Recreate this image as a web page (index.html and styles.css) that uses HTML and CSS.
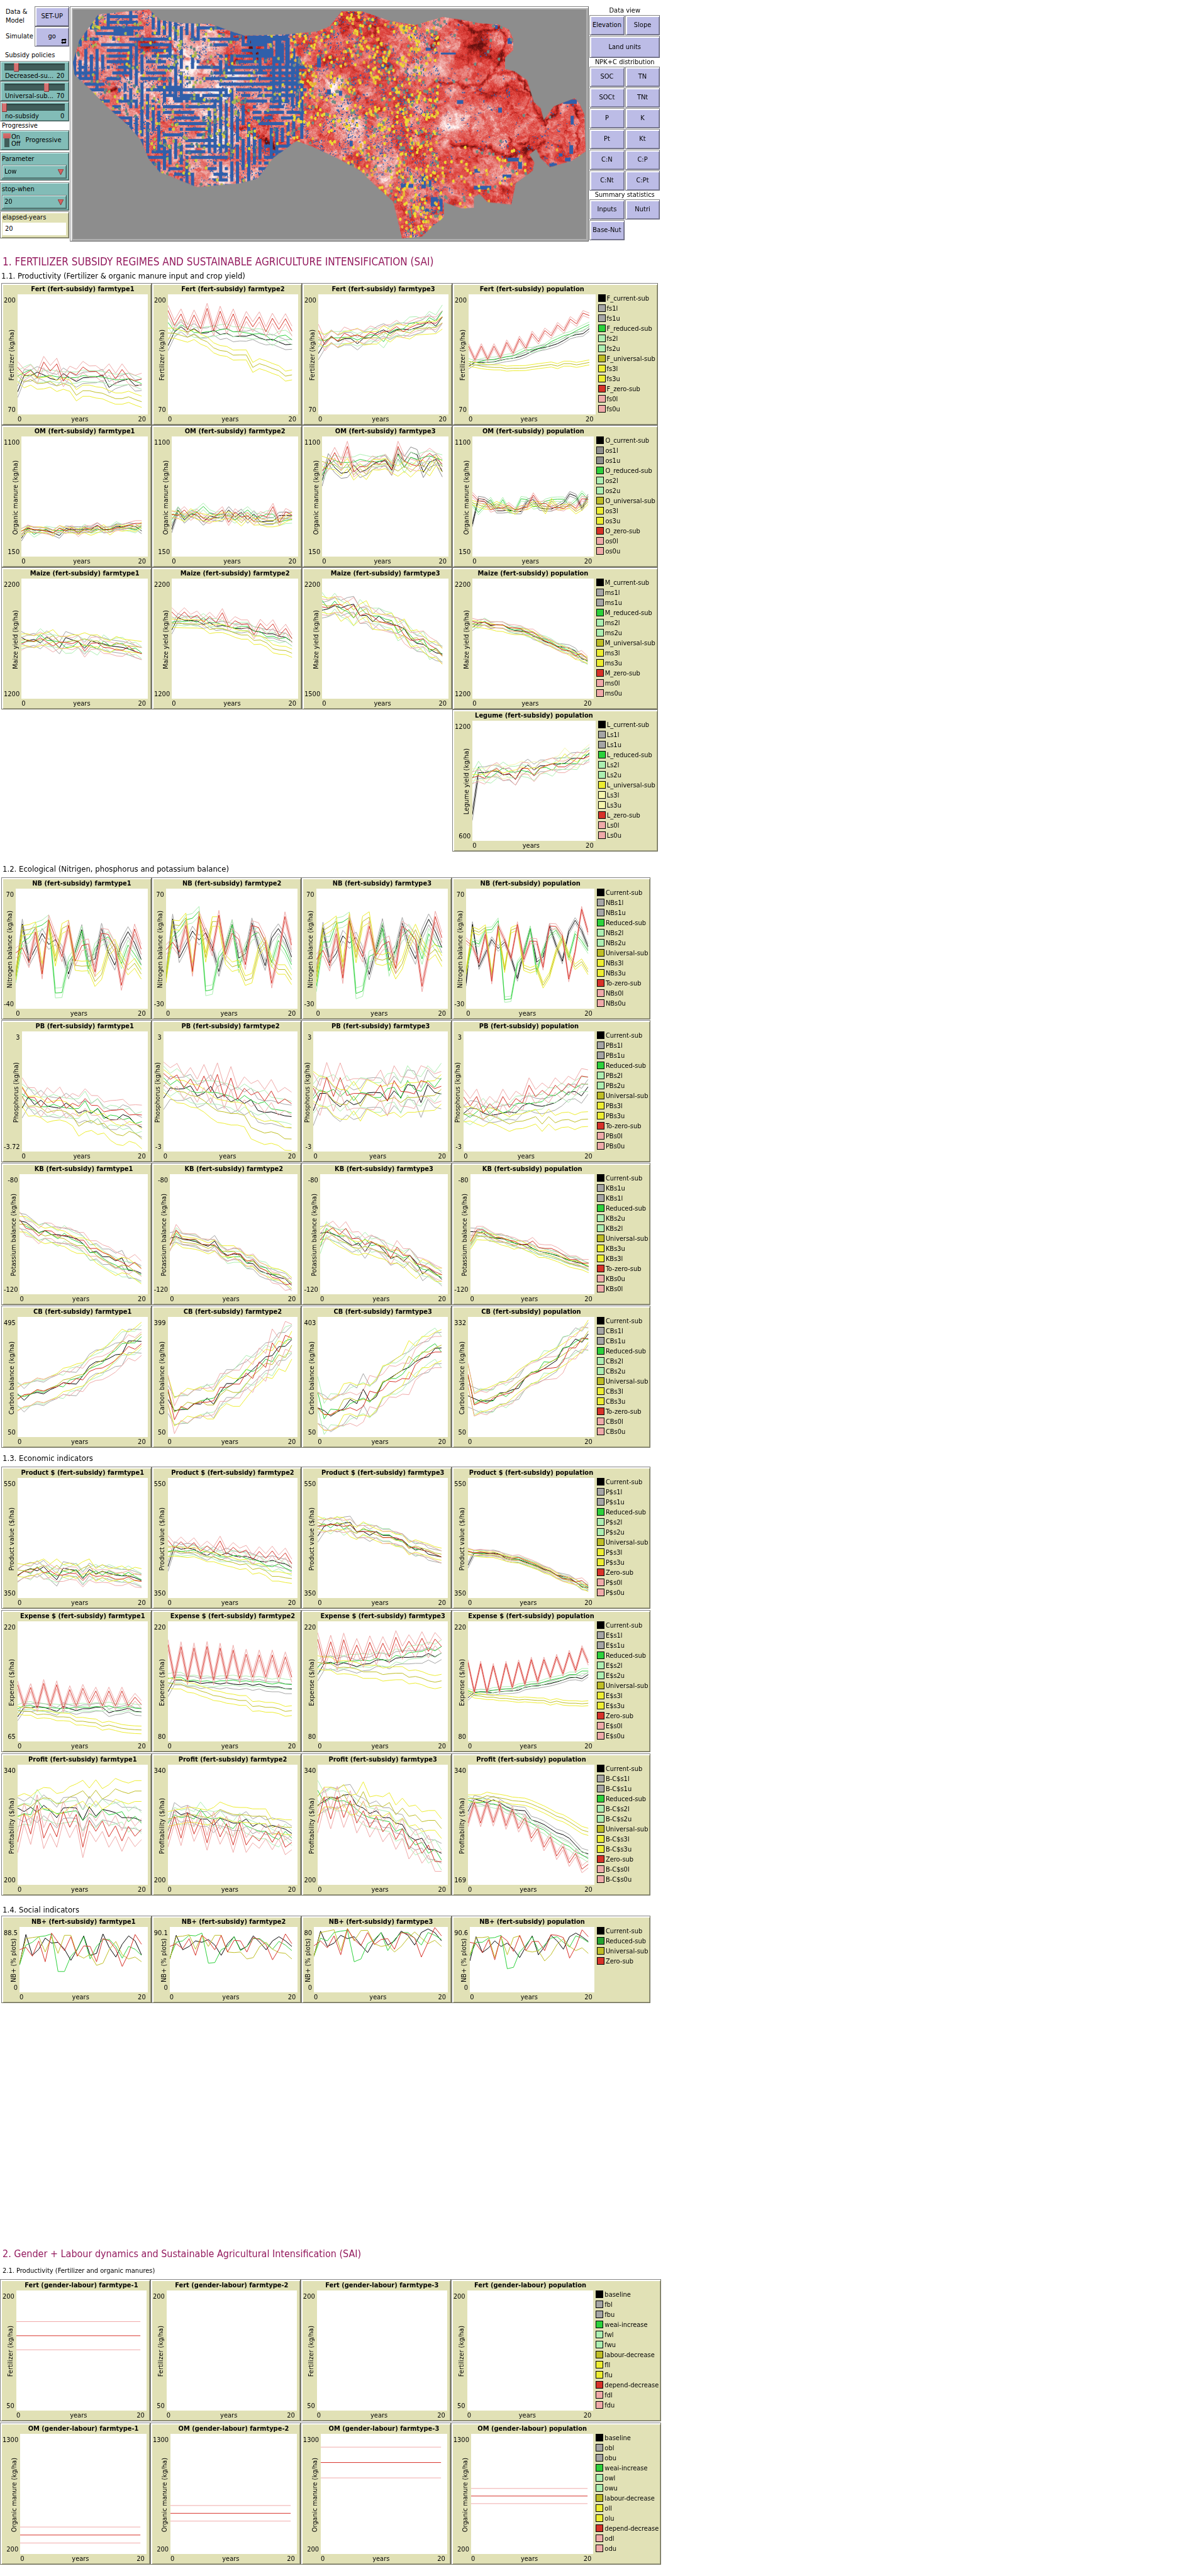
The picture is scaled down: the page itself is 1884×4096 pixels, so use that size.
FILE: index.html
```html
<!DOCTYPE html>
<html lang="en">
<head>
<meta charset="utf-8">
<title>Fertilizer subsidy and gender-labour model</title>
<link rel="stylesheet" href="styles.css">
</head>
<body>
<main>
  <section class="interface">
    <div class="controls">
      <div class="run">
        <p class="note">Data &amp;<br>Model</p>
        <button class="btn" type="button">SET-UP</button>
        <p class="note">Simulate</p>
        <button class="btn go" type="button">go
          <svg class="loop" viewBox="0 0 10 10" aria-hidden="true"><path d="M1 5V2.500Q1 1 2.500 1H7V0L10 2.500 7 5V3.500H3V5ZM9 5V7.500Q9 9 7.500 9H3V10L0 7.500 3 5V6.500H7V5Z"/></svg>
        </button>
      </div>
      <p class="note policies">Subsidy policies</p>
      <div class="widget slider">
        <input id="decreased" type="range" min="0" max="100" value="20">
        <label for="decreased">Decreased-su...</label><output for="decreased">20</output>
      </div>
      <div class="widget slider">
        <input id="universal" type="range" min="0" max="100" value="70">
        <label for="universal">Universal-sub...</label><output for="universal">70</output>
      </div>
      <div class="widget slider">
        <input id="nosubsidy" type="range" min="0" max="100" value="0">
        <label for="nosubsidy">no-subsidy</label><output for="nosubsidy">0</output>
      </div>
      <p class="note progressive">Progressive</p>
      <div class="widget switch">
        <input id="progressive" type="checkbox" checked>
        <span class="onoff">On<br>Off</span>
        <label for="progressive">Progressive</label>
      </div>
      <div class="widget chooser">
        <label for="parameter">Parameter</label>
        <span class="pick"><select id="parameter"><option>Low</option><option>High</option></select>
        <svg viewBox="0 0 10 10" aria-hidden="true"><path d="M0 0H10L5 10Z"/></svg></span>
      </div>
      <div class="widget chooser">
        <label for="stopwhen">stop-when</label>
        <span class="pick"><select id="stopwhen"><option>20</option><option>50</option></select>
        <svg viewBox="0 0 10 10" aria-hidden="true"><path d="M0 0H10L5 10Z"/></svg></span>
      </div>
      <div class="widget monitor">
        <label for="elapsed">elapsed-years</label>
        <output id="elapsed">20</output>
      </div>
    </div>

    <div class="world"><canvas id="map" width="822" height="367"></canvas></div>

    <div class="views">
      <p class="note">Data view</p>
      <div class="pair">
        <button class="btn" type="button">Elevation</button>
        <button class="btn" type="button">Slope</button>
        <button class="btn wide" type="button">Land units</button>
      </div>
      <p class="note">NPK+C distribution</p>
      <div class="pair">
        <button class="btn" type="button">SOC</button>
        <button class="btn" type="button">TN</button>
        <button class="btn" type="button">SOCt</button>
        <button class="btn" type="button">TNt</button>
        <button class="btn" type="button">P</button>
        <button class="btn" type="button">K</button>
        <button class="btn" type="button">Pt</button>
        <button class="btn" type="button">Kt</button>
        <button class="btn" type="button">C:N</button>
        <button class="btn" type="button">C:P</button>
        <button class="btn" type="button">C:Nt</button>
        <button class="btn" type="button">C:Pt</button>
      </div>
      <p class="note">Summary statistics</p>
      <div class="pair">
        <button class="btn" type="button">Inputs</button>
        <button class="btn" type="button">Nutri</button>
        <button class="btn" type="button">Base-Nut</button>
      </div>
    </div>
  </section>

  <section class="topic">
    <h1 class="capitals">1. FERTILIZER SUBSIDY REGIMES AND SUSTAINABLE AGRICULTURE INTENSIFICATION (SAI)</h1>
    <h2 class="first">1.1. Productivity (Fertilizer &amp; organic manure input and crop yield)</h2>
    <div class="plots productivity" id="productivity"></div>
    <h2 class="ecology-title">1.2. Ecological (Nitrigen, phosphorus and potassium balance)</h2>
    <div class="plots ecology" id="ecology"></div>
    <h2>1.3. Economic indicators</h2>
    <div class="plots economy" id="economy"></div>
    <h2 class="social-title">1.4. Social indicators</h2>
    <div class="plots social" id="social"></div>
  </section>

  <section class="topic gender">
    <h1>2. Gender + Labour dynamics and Sustainable Agricultural Intensification (SAI)</h1>
    <h2 class="small">2.1. Productivity (Fertilizer and organic manures)</h2>
    <div class="plots labour" id="labour"></div>
  </section>
</main>
<script src="script.js"></script>
</body>
</html>
```
FILE: styles.css
```css
* { box-sizing: border-box; }

body {
  margin: 0;
  background: #fff;
  color: #000;
  font: 11px/14px "DejaVu Sans Condensed", "Noto Sans", sans-serif;
}

p, h1, h2, ul, figure { margin: 0; padding: 0; }
button, select, input { font: inherit; color: inherit; margin: 0; }

/* Top: controls, world view, view buttons */
.interface {
  display: grid;
  grid-template-columns: 110fr 823fr 112fr;
  gap: 1px;
  width: 55.7%;
  padding-top: 10px;
}

.controls { display: flex; flex-direction: column; }

.run {
  display: grid;
  grid-template-columns: 1fr 1fr;
  grid-auto-rows: 32px;
  align-items: center;
  height: 64px;
}
.run .note { padding-left: 9px; }

.btn {
  position: relative;
  padding: 0;
  width: 100%;
  height: 32px;
  background: #bcbce6;
  border: 1px solid;
  border-color: #848484 #5e5e73 #5e5e73 #848484;
  box-shadow: inset 2px 2px 0 #fff, inset -1px -1px 0 #8686a4;
  white-space: nowrap;
}
.loop { position: absolute; right: 3px; bottom: 3px; width: 9px; height: 9px; }

.policies { padding: 7px 0 2px 8px; }
.progressive { padding-left: 3px; }

.widget {
  background: #82bcb7;
  border: 1px solid;
  border-color: #848484 #3e5a57 #3e5a57 #848484;
  box-shadow: inset 1px 1px 0 #d8fbf8, inset -1px -1px 0 #5d8682;
}

.slider {
  display: grid;
  grid-template-columns: 1fr auto;
  height: 32px;
  padding: 2px 7px 0;
}
.slider input {
  grid-column: 1 / -1;
  appearance: none;
  width: auto;
  height: 13px;
  margin: 0 -5px;
  background: linear-gradient(#263b39, #405d5a 3px, #405d5a 10px, #263b39 11px) 4px 1px / calc(100% - 8px) 11px no-repeat;
}
.slider input::-webkit-slider-thumb {
  appearance: none;
  width: 8px;
  height: 14px;
  background: #d67070;
  border: 1px solid;
  border-color: #eab8b8 #7c3636 #7c3636 #b46060;
}

.switch {
  display: flex;
  align-items: center;
  height: 32px;
  padding-left: 4px;
}
.switch input {
  appearance: none;
  width: 12px;
  height: 23px;
  background:
    linear-gradient(#d67070, #c85f5f) 0 0 / 12px 8px no-repeat,
    linear-gradient(#405d5a, #405d5a) 2px 8px / 8px 14px no-repeat;
}
.onoff { line-height: 11px; padding-left: 1px; }
.switch label { padding-left: 8px; }

.chooser {
  height: 45px;
  margin-top: 3px;
  padding: 3px 3px 0 2px;
  display: flex;
  flex-direction: column;
  gap: 2px;
}
.pick { position: relative; display: block; }
.pick select {
  display: block;
  appearance: none;
  width: 100%;
  height: 22px;
  padding: 0 3px;
  background: #82bcb7;
  border: 1px solid;
  border-color: #848484 #3e5a57 #3e5a57 #848484;
  border-radius: 0;
  box-shadow: inset 1px 1px 0 #d8fbf8, inset -1px -1px 0 #5d8682;
}
.pick svg {
  position: absolute;
  right: 5px;
  top: 7px;
  width: 9px;
  height: 9px;
  fill: #d66060;
  stroke: #7c3636;
  pointer-events: none;
}

.monitor {
  display: flex;
  flex-direction: column;
  gap: 1px;
  height: 43px;
  margin-top: 1px;
  padding: 2px 4px 0 3px;
  background: #e1e1b6;
  border-color: #848484 #6c6c57 #6c6c57 #848484;
  box-shadow: inset 2px 2px 0 #fff, inset -1px -1px 0 #a0a082;
}
.monitor output { height: 20px; padding: 3px 4px; background: #fff; }

.world {
  border: 1px solid;
  border-color: #848484 #5e5e5e #5e5e5e #848484;
  box-shadow: inset 2px 2px 0 #fff, inset 0 0 0 4px #b0b0b0;
  padding: 4px 3px 3px 4px;
}
.world canvas { display: block; width: 100%; height: 365px; }

.views { text-align: center; }
.pair { display: grid; grid-template-columns: 1fr 1fr; gap: 1px; }
.wide { grid-column: 1 / -1; height: 35px; }

/* Headings */
h1, h2 { font-weight: 400; padding-left: 4px; white-space: nowrap; }
h1 { font-size: 16px; line-height: 20px; color: #93195d; padding-top: 22px; }
h1.capitals { font-size: 17px; }
h2 { font-size: 13px; line-height: 18px; padding-top: 8px; padding-bottom: 4px; }
h2.first { padding-top: 4px; padding-bottom: 2px; padding-left: 2px; }
h2.ecology-title { padding-top: 19px; }
h2.social-title { padding-top: 14px; padding-bottom: 0; }
h2.small { font-size: 11px; }
.gender { padding-top: 367px; padding-bottom: 17px; }

/* Plot panels */
.plots { display: grid; grid-template-columns: 240fr 240fr 240fr 328fr; --area: 191px; }
.productivity { width: 55.4%; margin-left: 2px; }
.ecology, .economy, .social { width: 54.800%; margin-left: 2px; grid-template-columns: 240fr 240fr 240fr 318fr; }
.ecology { row-gap: 1px; }
.economy { row-gap: 2px; }
.social { --area: 104px; }
.labour { width: 55.8%; row-gap: 2px; grid-template-columns: 240fr 240fr 240fr 336fr; }

.plot {
  display: grid;
  grid-template-columns: auto 1fr auto;
  grid-template-rows: 17px var(--area) 16px;
  min-width: 0;
  padding: 0 5px 0 3px;
  background: #e1e1b6;
  border: 1px solid;
  border-color: #848484 #6c6c57 #6c6c57 #848484;
  box-shadow: inset 2px 2px 0 #fff, inset -1px -1px 0 #a0a082;
}
.plot.last { grid-column: 4; padding-right: 3px; }
.plot figcaption {
  grid-column: 2;
  display: flex;
  justify-content: center;
  font-weight: 700;
  line-height: 17px;
  white-space: nowrap;
}
.yaxis {
  grid-area: 2 / 1;
  display: flex;
  flex-direction: column;
  justify-content: space-between;
  align-items: flex-end;
  padding: 3px 3px 0 0;
}
.ylabel { writing-mode: vertical-rl; transform: rotate(180deg); line-height: 12px; white-space: nowrap; }
.lines { grid-area: 2 / 2; width: 100%; height: 100%; background: #fff; }
.lines polyline { fill: none; stroke-width: 1px; vector-effect: non-scaling-stroke; }
.xaxis { grid-area: 3 / 2; display: flex; justify-content: space-between; padding: 1px 3px 0 0; }
.legend { grid-area: 2 / 3 / 4 / 4; list-style: none; padding-left: 4px; }
.legend li { display: flex; gap: 2px; height: 16px; line-height: 14px; white-space: nowrap; }
.swatch { width: 12px; height: 12px; border: 1px solid #000; }
```
FILE: script.js
```js
const COLOR = {
  black: '#000000', grey: '#a5a5a5', steel: '#8d8d8d', green: '#2cd13b', mint: '#acefb1',
  forest: '#23a32f', olive: '#bfbe25', yellow: '#eded31', cream: '#f6f6ad', red: '#d73229', pink: '#f0aaa9'
};
const MAIN = ['black', 'green', 'olive', 'red'];
const BAND = ['grey', 'mint', 'yellow', 'pink'];

/* Each plot: y ticks, recorder band, half width of the confidence band,
   then the four scenario series (current, reduced, universal, zero). */
const SETS = {
  productivity: [
    { name: 'Fert', label: 'Fertilizer (kg/ha)', legend: 'F', key: 'fs', plots: [
      ['200', '70', [91, 668], 27, ['560,480,482,465,478,495,503,472,492,510,492,490,489,478,538,517,506,497,529,526', '484,467,453,488,486,480,487,490,491,491,482,485,485,488,495,502,500,497,508,520', '483,513,500,520,518,510,531,520,530,576,554,554,562,566,580,592,592,583,596,607', '441,478,457,492,416,460,425,508,463,478,440,462,461,485,452,497,452,494,507,497']],
      ['200', '70', [91, 668], 24, ['338,272,247,272,256,278,276,263,284,278,295,291,292,284,300,310,307,320,333,331', '226,268,238,254,274,276,270,270,261,257,271,271,276,282,280,288,314,292,287,310', '277,278,288,297,284,306,319,348,361,365,383,382,382,442,424,434,447,458,484,478', '168,240,185,262,190,256,158,265,172,256,185,268,197,247,199,271,206,260,208,268']],
      ['200', '70', [91, 668], 30, ['376,323,292,318,304,304,328,300,300,275,262,278,262,258,262,252,243,218,244,200', '310,312,300,300,297,298,310,298,284,290,318,272,258,258,230,228,240,203,220,172', '296,315,295,315,300,295,284,305,300,300,272,290,265,268,276,256,254,252,250,228', '264,333,296,315,278,292,287,297,273,285,270,267,246,270,252,238,230,228,230,200']],
      ['200', '70', [91, 668], 12, ['437,418,418,418,415,408,402,398,391,380,364,352,346,338,328,312,293,284,280,256', '412,420,412,405,405,398,391,387,372,358,358,350,340,318,304,290,282,265,250,236', '425,430,436,440,442,442,448,446,446,445,440,436,432,428,436,424,424,430,424,418', '340,405,340,403,340,395,322,373,304,350,280,318,265,290,238,266,210,233,181,193']]
    ] },
    { name: 'OM', label: 'Organic manure (kg/ha)', legend: 'O', key: 'os', steel: true, plots: [
      ['1100', '150', [774, 1356], 13, ['1268,1218,1228,1228,1228,1240,1254,1220,1225,1225,1225,1225,1206,1228,1225,1210,1212,1206,1210,1232', '1232,1222,1249,1232,1222,1228,1230,1228,1228,1235,1213,1230,1225,1225,1222,1200,1215,1220,1228,1208', '1245,1225,1225,1225,1230,1245,1218,1228,1228,1235,1228,1240,1228,1215,1238,1215,1220,1215,1222,1202', '1234,1216,1225,1228,1234,1240,1220,1232,1217,1246,1219,1219,1204,1225,1226,1218,1213,1203,1195,1195']],
      ['1100', '150', [774, 1356], 16, ['1225,1132,1178,1150,1155,1188,1160,1166,1170,1130,1164,1142,1178,1150,1188,1185,1184,1157,1156,1158', '1178,1130,1166,1150,1140,1113,1145,1158,1150,1160,1178,1152,1130,1160,1165,1150,1150,1190,1180,1178', '1150,1155,1170,1140,1160,1165,1172,1170,1160,1155,1165,1192,1160,1188,1186,1196,1196,1190,1172,1158', '1152,1157,1130,1165,1142,1172,1180,1158,1130,1190,1140,1165,1158,1185,1154,1165,1114,1190,1139,1155']],
      ['1100', '150', [774, 1356], 25, ['990,882,925,952,948,912,948,935,910,895,892,938,858,896,850,862,948,898,885,945', '965,910,890,900,900,898,885,892,898,895,885,920,862,925,875,885,875,868,880,888', '895,905,910,940,905,960,930,958,910,912,905,925,942,918,946,915,915,940,890,920', '940,912,852,912,822,946,920,920,893,909,885,935,822,893,908,918,880,856,880,908']],
      ['1100', '150', [774, 1356], 11, ['1200,1075,1080,1100,1134,1134,1130,1138,1138,1088,1080,1120,1125,1125,1112,1095,1052,1064,1122,1065', '1102,1142,1110,1080,1125,1080,1135,1135,1076,1080,1115,1110,1088,1080,1078,1078,1110,1085,1048,1080', '1095,1105,1115,1115,1100,1115,1125,1140,1120,1118,1100,1100,1138,1085,1120,1115,1112,1138,1120,1092', '1056,1086,1088,1130,1120,1120,1106,1130,1122,1115,1058,1100,1098,1120,1118,1124,1102,1122,1076,1078']]
    ] },
    { name: 'Maize', label: 'Maize yield (kg/ha)', legend: 'M', key: 'ms', plots: [
      ['2200', '1200', [79, 660], 29, ['364,380,373,390,361,382,414,364,375,385,416,380,390,395,404,408,412,420,432,442', '388,383,383,350,378,380,385,412,410,385,405,402,420,380,405,395,392,422,415,438', '376,375,385,375,370,355,388,388,380,380,370,382,380,400,408,388,400,404,408,412', '396,380,382,366,385,405,386,387,394,382,430,392,390,412,414,424,426,407,432,442']],
      ['2200', '1200', [79, 660], 20, ['328,268,281,281,284,300,292,310,306,312,320,322,316,332,338,346,346,358,363,385', '290,284,288,283,290,268,292,292,302,312,318,310,310,332,336,360,358,370,364,385', '295,296,297,298,298,302,325,320,320,330,343,352,352,378,376,390,418,425,427,440', '240,270,240,272,256,290,262,292,244,312,283,299,299,350,296,328,298,354,320,370']],
      ['2200', '1500', [79, 660], 38, ['232,225,210,222,209,203,258,257,288,260,288,298,308,322,370,393,397,420,438,443', '184,225,188,226,238,270,218,250,260,260,275,282,342,322,355,390,372,433,415,447', '203,212,205,248,225,268,240,224,285,290,290,284,330,312,370,365,395,420,425,455', '216,220,205,205,230,208,258,248,262,286,295,304,306,355,378,375,370,400,418,452']],
      ['2200', '1200', [79, 660], 15, ['316,293,290,306,302,303,320,330,333,336,358,368,384,393,408,410,415,430,467,475', '300,305,285,302,302,303,322,328,325,345,352,365,372,385,405,415,428,440,460,480', '295,300,305,310,318,320,330,335,335,340,350,370,378,395,410,420,435,455,460,475', '286,294,290,303,303,303,316,318,322,338,338,360,382,390,410,425,428,452,442,470']]
    ] },
    { name: 'Legume', label: 'Legume yield (kg/ha)', legend: 'L', key: 'Ls', cream: true, plots: [
      ['1200', '600', [763, 1341], 28, ['1215,1013,1013,1005,1006,1023,1020,1045,998,976,1000,980,980,970,972,968,946,943,946,918', '1040,986,1030,1035,1012,990,1010,1010,1003,1008,1022,990,988,1002,968,970,968,970,930,925', '1022,1022,1020,1008,1000,1015,1005,1000,985,995,988,992,980,970,960,922,950,962,930,905', '1037,1028,1040,1008,992,1024,1016,1045,992,992,1028,992,978,970,985,985,968,942,946,932']]
    ] }
  ],
  ecology: [
    { name: 'NB', label: 'Nitrogen balance (kg/ha)', key: 'NBs', plots: [
      ['70', '-40', [157, 738], 24, ['580,328,507,445,374,427,404,458,570,462,355,510,497,348,462,527,425,365,420,500', '590,415,395,345,333,308,662,660,512,465,362,545,445,408,390,440,520,430,475,527', '575,360,355,342,545,330,508,350,333,528,532,530,606,572,460,425,500,550,518,570', '468,443,515,367,570,308,395,487,335,508,433,424,560,373,378,440,625,490,352,450']],
      ['70', '-30', [157, 738], 23, ['570,303,492,430,362,406,370,440,558,440,330,493,473,322,438,530,395,350,400,488', '575,390,360,308,300,266,652,645,490,445,332,540,445,385,368,435,515,408,455,525', '590,332,335,298,545,290,490,316,316,500,535,525,602,590,460,415,510,548,548,598', '452,416,463,335,558,290,375,460,285,476,373,402,525,335,345,410,615,480,292,430']],
      ['70', '-30', [157, 738], 26, ['560,345,515,470,385,420,393,465,572,455,328,502,455,322,430,497,375,305,365,442', '630,415,415,325,318,296,664,652,485,470,348,555,455,385,355,405,497,375,430,440', '585,360,340,315,540,300,490,316,295,495,503,490,568,520,420,355,430,478,450,508', '500,455,530,375,590,312,420,487,338,482,430,412,543,340,365,405,630,470,292,395']],
      ['70', '-30', [157, 738], 13, ['615,330,535,470,403,447,415,490,592,460,352,512,487,338,430,508,365,310,360,438', '560,412,425,358,355,312,694,690,520,475,350,560,455,385,358,410,490,375,410,458', '560,355,368,345,575,355,550,358,345,540,552,540,625,575,465,395,480,535,510,560', '408,435,515,378,605,338,405,495,330,500,410,412,538,338,340,385,595,460,256,368']]
    ] },
    { name: 'PB', label: 'Phosphorus (kg/ha)', key: 'PBs', plots: [
      ['3', '-3.72', [843, 1428], 48, ['1217,1162,1200,1178,1207,1212,1217,1192,1215,1241,1228,1242,1219,1258,1273,1273,1248,1260,1295,1310', '1147,1170,1180,1210,1210,1198,1210,1215,1220,1218,1182,1240,1218,1268,1250,1255,1273,1265,1292,1282', '1158,1208,1205,1215,1238,1230,1226,1235,1255,1305,1285,1277,1297,1290,1325,1345,1351,1330,1340,1367', '1116,1165,1165,1212,1165,1192,1162,1218,1193,1208,1170,1203,1204,1235,1228,1226,1222,1250,1248,1250']],
      ['3', '-3', [843, 1428], 56, ['1168,1118,1124,1122,1108,1158,1144,1110,1168,1152,1186,1170,1194,1175,1228,1238,1235,1245,1254,1258', '1068,1103,1080,1110,1133,1142,1138,1140,1142,1150,1160,1182,1155,1178,1195,1185,1220,1225,1230,1240', '1085,1110,1135,1138,1155,1160,1180,1208,1230,1235,1243,1243,1252,1310,1325,1338,1332,1342,1366,1367', '1048,1076,1055,1118,1075,1132,1060,1137,1052,1163,1070,1173,1120,1153,1137,1182,1133,1195,1172,1195']],
      ['3', '-3', [843, 1428], 72, ['1230,1145,1145,1185,1210,1178,1200,1190,1143,1140,1142,1180,1132,1165,1102,1108,1190,1102,1140,1148', '1170,1128,1140,1125,1160,1130,1180,1140,1145,1165,1165,1122,1115,1170,1082,1125,1135,1082,1115,1070', '1110,1135,1140,1180,1198,1200,1158,1208,1150,1165,1185,1175,1165,1190,1165,1165,1160,1158,1155,1125', '1118,1180,1066,1160,1068,1155,1145,1145,1150,1153,1103,1183,1082,1135,1138,1147,1082,1095,1122,1110']],
      ['3', '-3', [843, 1428], 36, ['1243,1216,1220,1240,1252,1248,1240,1235,1240,1206,1192,1204,1208,1200,1190,1170,1140,1135,1157,1113', '1243,1262,1235,1205,1245,1218,1240,1228,1195,1192,1195,1190,1185,1153,1155,1130,1153,1120,1100,1100', '1248,1243,1258,1270,1250,1262,1278,1294,1282,1280,1270,1258,1294,1258,1288,1275,1272,1285,1272,1270', '1162,1206,1160,1240,1195,1228,1160,1213,1170,1192,1105,1162,1130,1155,1105,1136,1097,1117,1060,1066']]
    ] },
    { name: 'KB', label: 'Potassium balance (kg/ha)', key: 'KBs', upperFirst: true, plots: [
      ['-80', '-120', [66, 501], 28, ['235,240,258,278,270,285,285,290,295,300,320,350,345,365,365,380,370,415,415,425', '232,255,265,278,272,285,300,280,300,310,320,350,350,370,385,395,410,410,418,430', '247,248,262,280,290,285,295,300,315,325,325,335,360,375,390,405,395,400,418,435', '230,262,268,290,270,272,290,288,290,305,305,335,335,350,358,375,385,400,385,408']],
      ['-80', '-120', [66, 501], 20, ['298,292,302,305,310,320,327,308,345,360,355,358,388,390,415,425,430,440,445,468', '325,280,300,302,305,320,322,325,340,370,365,365,388,380,400,405,430,430,440,460', '318,295,312,315,318,325,335,325,345,345,345,365,378,382,405,415,425,430,440,460', '325,268,300,302,302,320,322,322,350,362,352,355,382,375,405,415,440,445,467,462']],
      ['-80', '-120', [66, 501], 24, ['280,276,282,293,310,325,315,347,313,320,345,372,362,382,360,385,428,408,425,447', '330,262,285,290,290,305,325,300,325,320,335,345,355,370,360,395,410,415,430,440', '290,270,290,305,315,330,335,328,335,345,350,365,365,375,400,420,398,410,430,430', '305,275,260,286,262,300,298,322,310,325,330,370,330,360,360,390,395,405,420,430']],
      ['-80', '-120', [66, 501], 13, ['274,275,278,295,298,300,302,315,322,320,335,345,350,355,362,370,378,385,390,402', '318,284,272,286,298,295,310,315,320,330,335,345,350,355,360,372,380,378,392,400', '325,290,292,292,300,310,315,325,318,330,340,355,355,362,370,380,390,395,400,410', '310,268,268,282,295,295,305,308,320,322,308,332,335,335,345,360,375,375,388,388']]
    ] },
    { name: 'CB', label: 'Carbon balance (kg/ha)', key: 'CBs', plots: [
      ['495', '50', [579, 1010], 42, ['855,878,855,850,855,840,830,815,818,820,790,755,740,738,728,715,712,665,665,667', '860,865,857,845,850,835,825,830,805,800,790,765,755,745,715,700,675,672,672,650', '872,860,855,840,845,835,825,805,800,790,785,765,745,735,720,690,665,675,660,640', '875,858,855,840,845,835,830,815,820,800,805,775,765,762,750,735,712,685,695,675']],
      ['399', '50', [579, 1010], 50, ['875,915,912,910,890,892,870,892,850,818,818,800,790,768,745,722,718,686,684,660', '848,920,905,912,892,880,875,870,850,835,820,795,767,775,760,730,740,700,665,657', '840,920,905,885,890,880,895,895,860,840,850,850,820,790,770,745,750,715,725,680', '838,948,900,910,892,885,885,880,832,832,820,820,780,800,740,760,672,705,645,655']],
      ['403', '50', [579, 1010], 56, ['905,915,935,920,908,875,890,838,882,865,815,800,785,770,760,740,727,722,692,690', '848,945,910,912,915,890,880,870,885,855,815,800,800,785,755,725,710,690,675,705', '905,930,930,920,875,870,880,875,880,860,810,805,785,770,720,740,705,705,690,680', '905,928,930,915,912,905,915,900,845,852,840,810,812,800,802,750,730,712,705,705']],
      ['332', '50', [579, 1010], 40, ['862,872,882,880,878,852,850,840,835,800,778,775,765,750,735,692,685,658,670,640', '790,890,875,885,880,852,865,845,825,800,778,775,740,742,728,690,685,668,655,660', '790,895,880,875,865,855,850,830,810,795,780,770,755,740,730,715,700,680,665,630', '785,895,885,890,870,862,855,850,820,800,785,778,765,763,760,740,690,690,655,657'], 'bare']
    ] }
  ],
  economy: [
    { name: 'Product $', label: 'Product value ($/ha)', key: 'P$s', zero: 'Zero-sub', plots: [
      ['550', '350', [1155, 1588], 23, ['1508,1490,1482,1490,1475,1500,1522,1480,1485,1488,1518,1485,1500,1492,1498,1505,1508,1508,1515,1525', '1505,1490,1500,1475,1495,1500,1510,1490,1498,1485,1512,1500,1490,1505,1490,1500,1508,1495,1510,1522', '1487,1490,1485,1480,1470,1488,1470,1490,1485,1495,1480,1470,1505,1490,1505,1502,1495,1510,1500,1505', '1505,1492,1495,1478,1498,1490,1505,1505,1498,1500,1525,1500,1510,1508,1510,1520,1520,1512,1525,1528']],
      ['550', '350', [1155, 1588], 17, ['1475,1402,1412,1408,1412,1425,1435,1420,1435,1425,1435,1440,1438,1445,1455,1458,1452,1460,1465,1478', '1420,1415,1420,1418,1415,1425,1418,1430,1440,1440,1435,1435,1445,1450,1455,1470,1475,1465,1480,1490', '1422,1420,1422,1425,1422,1430,1440,1440,1448,1455,1460,1468,1465,1485,1480,1490,1510,1510,1515,1518', '1380,1408,1385,1408,1388,1420,1400,1420,1382,1430,1405,1425,1415,1450,1420,1445,1418,1450,1425,1465']],
      ['550', '350', [1155, 1588], 22, ['1365,1330,1320,1328,1318,1315,1350,1348,1362,1348,1362,1362,1375,1378,1400,1415,1410,1430,1435,1440', '1330,1320,1335,1315,1340,1325,1350,1340,1345,1350,1360,1360,1378,1385,1400,1410,1415,1420,1430,1440', '1315,1325,1325,1318,1320,1345,1355,1335,1350,1360,1370,1368,1380,1380,1410,1400,1408,1415,1425,1430', '1328,1328,1322,1325,1330,1325,1348,1348,1348,1350,1370,1370,1370,1380,1405,1405,1415,1420,1430,1440']],
      ['550', '350', [1155, 1588], 10, ['1470,1425,1425,1428,1425,1430,1445,1450,1450,1458,1465,1475,1485,1490,1505,1510,1515,1530,1548,1550', '1420,1428,1428,1425,1428,1432,1438,1445,1448,1455,1465,1472,1482,1492,1505,1515,1520,1532,1540,1548', '1422,1425,1430,1432,1432,1438,1445,1450,1452,1460,1468,1476,1488,1495,1508,1518,1525,1530,1545,1555', '1418,1425,1422,1425,1428,1432,1440,1445,1442,1452,1460,1470,1482,1490,1505,1518,1520,1530,1525,1545']]
    ] },
    { name: 'Expense $', label: 'Expense ($/ha)', key: 'E$s', zero: 'Zero-sub', plots: [
      ['220', '65', [120, 560], 14, ['470,435,437,432,435,442,450,432,440,447,440,440,435,435,455,448,445,438,450,452', '440,430,428,435,436,436,438,440,438,435,434,436,432,434,430,436,438,432,438,440', '445,450,450,462,460,462,470,470,472,486,486,490,492,505,500,506,512,515,517,518', '352,430,362,437,347,430,352,440,370,430,365,420,375,430,375,430,375,430,398,425']],
      ['220', '80', [120, 560], 18, ['378,335,335,340,340,348,345,345,350,345,350,352,348,355,350,358,360,360,367,367', '330,325,325,338,335,340,338,342,338,338,335,340,338,342,340,345,350,345,350,352', '345,350,350,362,365,375,382,392,395,402,405,410,410,432,430,435,435,440,450,447', '205,330,213,335,217,330,212,335,218,330,225,330,240,325,243,325,243,325,250,325']],
      ['220', '80', [120, 560], 24, ['315,275,270,280,272,278,286,277,275,262,260,270,255,252,252,250,250,238,250,236', '288,268,275,270,270,265,265,262,265,255,262,262,245,250,235,232,230,220,228,212', '270,275,275,290,288,290,295,305,305,305,315,312,310,310,325,322,328,338,343,338', '185,275,195,275,187,265,207,265,197,255,200,250,178,235,193,230,182,230,185,212']],
      ['220', '80', [120, 560], 9, ['400,380,378,380,382,378,376,375,372,362,358,356,352,348,342,335,327,325,330,315', '375,382,378,378,372,370,368,368,358,355,350,350,342,335,330,325,315,315,302,302', '380,392,394,398,398,402,402,405,408,406,408,410,410,418,412,418,420,420,422,420', '270,378,275,380,283,375,275,362,270,350,260,340,260,325,250,312,235,300,218,272']]
    ] },
    { name: 'Profit', label: 'Profitability ($/ha)', key: 'B-C$s', zero: 'Zero-sub', plots: [
      ['340', '200', [637, 1075], 38, ['795,808,792,810,785,805,830,795,793,795,840,790,825,800,805,812,830,830,832,842', '825,815,820,765,800,805,815,812,808,805,840,815,830,800,820,815,808,845,825,850', '790,780,790,770,758,760,780,775,755,745,732,760,730,762,748,725,735,742,733,733', '920,815,890,785,905,850,900,808,865,818,938,840,880,842,900,860,915,862,898,872']],
      ['340', '200', [637, 1075], 27, ['880,802,820,812,825,835,835,858,832,840,850,850,835,862,850,865,858,865,872,888', '850,820,830,825,835,800,830,835,830,860,870,840,860,870,880,880,900,910,880,905', '835,830,825,820,820,825,830,820,800,810,818,820,820,825,825,825,865,860,865,865', '910,825,905,812,890,835,922,835,900,852,930,850,930,895,915,880,920,880,938,920']],
      ['340', '200', [637, 1075], 36, ['785,770,755,760,748,745,785,795,815,805,830,830,850,855,898,912,905,945,948,960', '730,775,760,770,768,780,800,820,830,835,840,845,880,870,900,930,920,960,945,985', '790,755,755,765,745,785,780,735,790,785,790,775,820,795,825,820,845,840,840,870', '850,755,835,752,830,768,850,805,865,825,882,850,910,870,945,910,960,930,990,990']],
      ['340', '169', [637, 1075], 13, ['808,762,768,775,765,775,790,800,803,805,838,845,855,870,885,892,905,930,955,962', '765,775,775,775,782,785,800,808,825,840,850,865,875,895,910,925,935,955,965,980', '760,760,760,750,755,758,762,768,770,772,780,790,800,812,825,832,845,860,875,882', '850,775,850,775,848,780,860,800,870,830,905,870,938,900,970,935,995,960,1018,1000']]
    ] }
  ],
  social: [
    { name: 'NB+', label: 'NB+ (% plots)', zero: 'Zero-sub', plots: [
      ['88.5', '0', [1220, 1455], 0, ['1355,1247,1322,1300,1260,1278,1275,1300,1340,1300,1252,1322,1315,1245,1295,1328,1282,1252,1270,1320', '1357,1285,1275,1255,1252,1245,1380,1380,1325,1300,1255,1335,1290,1265,1265,1290,1332,1290,1300,1322', '1350,1262,1258,1255,1310,1255,1315,1250,1250,1320,1332,1318,1358,1350,1300,1272,1320,1335,1328,1345', '1302,1293,1325,1270,1345,1242,1275,1305,1255,1325,1288,1290,1345,1262,1270,1300,1362,1315,1247,1282']],
      ['90.1', '0', [1220, 1455], 0, ['1335,1250,1302,1290,1270,1275,1265,1285,1322,1280,1255,1302,1290,1252,1275,1302,1270,1255,1270,1290', '1330,1275,1270,1250,1252,1242,1350,1348,1302,1290,1255,1305,1290,1262,1262,1280,1300,1272,1285,1305', '1335,1255,1253,1248,1300,1250,1290,1250,1250,1310,1312,1310,1335,1330,1290,1275,1300,1312,1315,1335', '1290,1280,1298,1262,1322,1250,1270,1302,1250,1310,1268,1270,1310,1258,1265,1285,1338,1300,1245,1280']],
      ['80', '0', [1220, 1455], 0, ['1325,1235,1290,1278,1250,1262,1255,1285,1312,1270,1240,1285,1270,1235,1250,1285,1240,1227,1240,1270', '1325,1260,1270,1240,1235,1232,1345,1335,1280,1265,1240,1305,1265,1240,1240,1260,1285,1240,1250,1265', '1325,1240,1235,1230,1305,1225,1270,1233,1232,1280,1290,1285,1310,1290,1260,1238,1260,1280,1268,1290', '1288,1270,1295,1252,1320,1228,1265,1287,1240,1283,1265,1262,1300,1240,1245,1260,1328,1275,1222,1252']],
      ['90.6', '0', [1220, 1455], 0, ['1342,1255,1312,1295,1270,1290,1278,1300,1330,1290,1252,1320,1290,1250,1270,1300,1255,1242,1255,1272', '1325,1275,1275,1260,1258,1250,1370,1365,1310,1285,1255,1305,1285,1260,1255,1275,1292,1252,1260,1275', '1320,1258,1258,1255,1330,1255,1320,1258,1252,1305,1310,1305,1342,1320,1282,1262,1290,1305,1295,1315', '1275,1280,1312,1265,1338,1252,1270,1308,1250,1305,1272,1272,1305,1248,1250,1258,1332,1290,1230,1255']]
    ] }
  ],
  labour: [
    { name: 'Fert', label: 'Fertilizer (kg/ha)', labour: 'f', plots: [
      ['200', '50', [225, 796], 67, [null, null, null, '440']],
      ['200', '50', [225, 796], 0, []], ['200', '50', [225, 796], 0, []], ['200', '50', [225, 796], 0, []]
    ] },
    { name: 'OM', label: 'Organic manure (kg/ha)', labour: 'o', plots: [
      ['1300', '200', [900, 1470], 38, [null, null, null, '1380']],
      ['1300', '200', [900, 1470], 37, [null, null, null, '1277']],
      ['1300', '200', [900, 1470], 73, [null, null, null, '1036']],
      ['1300', '200', [900, 1470], 36, [null, null, null, '1195']]
    ] }
  ]
};

function legendOf(row) {
  const bands = BAND.slice();
  const mains = MAIN.slice();
  if (row.steel) bands[0] = 'steel';
  if (row.cream) { mains[2] = 'yellow'; bands[2] = 'cream'; }
  if (row.labour) {
    const letters = ['b', 'w', 'l', 'd'];
    return ['baseline', 'weai-increase', 'labour-decrease', 'depend-decrease'].flatMap((name, i) =>
      [[name, mains[i]], [row.labour + letters[i] + 'l', bands[i]], [row.labour + letters[i] + 'u', bands[i]]]);
  }
  const names = row.legend
    ? ['current', 'reduced', 'universal', 'zero'].map(n => `${row.legend}_${n}-sub`)
    : ['Current-sub', 'Reduced-sub', 'Universal-sub', row.zero || 'To-zero-sub'];
  if (!row.key) return names.map((n, i) => [n, i === 1 ? 'forest' : mains[i]]);
  const ends = row.upperFirst ? ['u', 'l'] : ['l', 'u'];
  return names.flatMap((n, i) => [[n, mains[i]], ...ends.map(e => [row.key + '1230'[i] + e, bands[i]])]);
}

function polyline(values, shift, color) {
  const step = 20 / (values.length - 1);
  const pts = values.map((v, i) => `${(i * step).toFixed(2)},${v + shift}`).join(' ');
  return `<polyline points="${pts}" stroke="${COLOR[color]}"/>`;
}

function plotMarkup(row, plot, index) {
  const [max, min, [top, bottom], band, series, bare] = plot;
  const last = index === row.plots.length - 1;
  const who = last ? 'population' : (row.labour ? 'farmtype-' : 'farmtype') + (index + 1);
  let lines = '';
  series.forEach((text, i) => {
    if (!text) return;
    let v = text.split(',').map(Number);
    if (v.length === 1) v = [v[0], v[0]];
    const bandColor = row.cream && i === 2 ? 'cream' : row.steel && i === 0 ? 'steel' : BAND[i];
    const mainColor = row.cream && i === 2 ? 'yellow' : MAIN[i];
    if (band) lines += polyline(v, -band, bandColor) + polyline(v, band, bandColor);
    lines += polyline(v, 0, mainColor);
  });
  const legend = last ? `<ul class="legend">${legendOf(row).map(([n, c]) =>
    `<li><span class="swatch" style="background:${COLOR[c]}"></span>${n}</li>`).join('')}</ul>` : '';
  return `<figure class="plot${last ? ' last' : ''}">
    <figcaption>${row.name} (${row.labour ? 'gender-labour' : 'fert-subsidy'}) ${who}</figcaption>
    <div class="yaxis"><span>${max}</span><span class="ylabel">${row.label}</span><span>${min}</span></div>
    <svg class="lines" viewBox="0 ${top} 21 ${bottom - top}" preserveAspectRatio="none">${lines}</svg>
    <div class="xaxis"><span>0</span><span>${bare ? '' : 'years'}</span><span>20</span></div>${legend}
  </figure>`;
}

for (const [id, rows] of Object.entries(SETS)) {
  document.getElementById(id).innerHTML =
    rows.map(row => row.plots.map((p, i) => plotMarkup(row, p, i)).join('')).join('');
}

/* World view: soil map with water, fields and household agents */
let seed = 20177;
function rnd() {
  seed = (seed * 1664525 + 1013904223) >>> 0;
  return seed / 4294967296;
}
const lattice = Array.from({ length: 65536 }, rnd);
function noise(x, y) {
  const xi = Math.floor(x), yi = Math.floor(y);
  let fx = x - xi, fy = y - yi;
  fx = fx * fx * (3 - 2 * fx);
  fy = fy * fy * (3 - 2 * fy);
  const at = (a, b) => lattice[((a & 255) + (b & 255) * 256)];
  const p = at(xi, yi) * (1 - fx) + at(xi + 1, yi) * fx;
  const q = at(xi, yi + 1) * (1 - fx) + at(xi + 1, yi + 1) * fx;
  return p * (1 - fy) + q * fy;
}

const OUTLINE = [[115, 100], [125, 65], [145, 38], [156, 23], [203, 18], [237, 15], [255, 32], [287, 37], [335, 38], [362, 48], [389, 57], [456, 55], [507, 50], [526, 42], [545, 18], [578, 18], [622, 33], [663, 40], [707, 27], [740, 32], [766, 37], [796, 39], [813, 47], [820, 62], [820, 80], [807, 92], [807, 110], [822, 114], [842, 128], [853, 163], [864, 173], [869, 192], [885, 170], [919, 157], [927, 167], [934, 183], [936, 242], [914, 257], [879, 267], [864, 253], [857, 238], [846, 247], [854, 260], [851, 273], [824, 293], [817, 327], [779, 323], [766, 310], [757, 315], [757, 332], [737, 333], [709, 323], [709, 347], [689, 363], [674, 378], [642, 381], [628, 322], [598, 295], [574, 272], [537, 252], [500, 235], [473, 225], [436, 252], [411, 285], [382, 293], [314, 299], [254, 275], [237, 255], [223, 223], [203, 200], [169, 170], [145, 145], [118, 120]];
const LIGHT = [[310, 85, 45, .18], [340, 125, 45, .2], [230, 145, 28, .12], [270, 165, 28, .15], [350, 225, 30, .15], [340, 270, 35, .12], [537, 135, 12, .45], [552, 168, 14, .2], [725, 195, 16, .45], [704, 205, 12, .35], [700, 105, 28, .25], [550, 218, 30, .2], [660, 115, 18, .15], [788, 175, 12, .25], [610, 265, 30, .2], [665, 290, 25, .2], [320, 175, 50, .1]];
const DARK = [[235, 75, 14, .4], [370, 80, 25, .25], [392, 170, 10, .4], [385, 200, 12, .3], [765, 80, 26, .4], [605, 72, 12, .35], [655, 150, 12, .3], [803, 302, 7, .4], [430, 195, 15, .25], [410, 80, 15, .3], [178, 147, 5, .5], [260, 127, 12, .3], [676, 325, 7, .3], [550, 85, 25, .15], [430, 230, 12, .25]];
const VEINS = [[[696, 133], [760, 137], [790, 122], [818, 117], [842, 133], [852, 163], [868, 200], [888, 173], [918, 163], [925, 190], [926, 233]], [[722, 233], [778, 237], [818, 250], [870, 230]], [[737, 33], [766, 52], [796, 47], [807, 63], [800, 100], [788, 117]], [[688, 83], [700, 60]], [[254, 80], [270, 65], [290, 95], [330, 100], [352, 118], [375, 100]], [[350, 55], [395, 65], [410, 95]], [[365, 200], [392, 205], [430, 225], [435, 245]], [[320, 235], [330, 210], [350, 195]], [[812, 220], [822, 245]]];

function segDist(x, y, a, b) {
  const dx = b[0] - a[0], dy = b[1] - a[1];
  const t = Math.max(0, Math.min(1, ((x - a[0]) * dx + (y - a[1]) * dy) / (dx * dx + dy * dy)));
  return Math.hypot(x - a[0] - t * dx, y - a[1] - t * dy);
}

const RAMP = [[95, 15, 15], [160, 32, 27], [218, 52, 46], [226, 92, 86], [234, 140, 135], [244, 190, 187], [255, 246, 245]];
function ramp(t) {
  const s = Math.max(0, Math.min(.9999, t)) * (RAMP.length - 1);
  const i = Math.floor(s), f = s - i;
  return RAMP[i].map((c, k) => c + (RAMP[i + 1][k] - c) * f);
}

const map = document.getElementById('map');
const ctx = map.getContext('2d');
const soil = document.createElement('canvas');
soil.width = map.width;
soil.height = map.height;
const sctx = soil.getContext('2d');
const image = sctx.createImageData(map.width, map.height);
for (let j = 0; j < map.height; j++) {
  for (let i = 0; i < map.width; i++) {
    const x = i + 115, y = j + 15;
    const wx = x + 12 * noise(x / 14, y / 14) + 5 * noise(x / 4, y / 4);
    const wy = y + 12 * noise(x / 14 + 90, y / 14 + 40) + 5 * noise(x / 4 + 60, y / 4);
    let t = .36 * noise(wx / 26, wy / 26) + .26 * noise(wx / 10, wy / 10) + .28 * noise(wx / 4, wy / 4) + .22 * rnd();
    t = (t - .56) * .95 + (x < 470 ? .62 : .53);
    for (const [cx, cy, r, a] of LIGHT) t += a * Math.exp(-((wx - 8 - cx) ** 2 + (wy - 8 - cy) ** 2) / (r * r));
    for (const [cx, cy, r, a] of DARK) t -= a * Math.exp(-((wx - 8 - cx) ** 2 + (wy - 8 - cy) ** 2) / (r * r));
    const ridge = Math.abs(noise(wx / 30 + 7, wy / 30 + 3) - .5);
    if (ridge < .03) t -= .16 * (1 - ridge / .03);
    let d = 99;
    for (const line of VEINS) for (let k = 1; k < line.length; k++) d = Math.min(d, segDist(wx - 8, wy - 8, line[k - 1], line[k]));
    if (d < 5) t -= .36 * (1 - d / 5);
    const c = ramp(t), o = (j * map.width + i) * 4;
    image.data[o] = c[0]; image.data[o + 1] = c[1]; image.data[o + 2] = c[2]; image.data[o + 3] = 255;
  }
}
sctx.putImageData(image, 0, 0);

ctx.fillStyle = '#8d8d8d';
ctx.fillRect(0, 0, map.width, map.height);
ctx.translate(-115, -15);
ctx.beginPath();
OUTLINE.forEach(([x, y]) => ctx.lineTo(x, y));
ctx.closePath();
ctx.save();
ctx.clip();
ctx.drawImage(soil, 115, 15);

/* Fields follow a 9-patch lattice, so neighbouring strips keep a gap */
ctx.fillStyle = '#305faa';
const openness = (x, y) => .75 * Math.exp(-((x - 315) ** 2 + (y - 90) ** 2) / 2200) + .8 * Math.exp(-((x - 175) ** 2 + (y - 140) ** 2) / 700)
  + Math.exp(-((x - 225) ** 2 + (y - 25) ** 2) / 500) + .5 * Math.exp(-((x - 320) ** 2 + (y - 275) ** 2) / 1200);
for (let n = 0; n < 1150; n++) {
  const x = 115 + 9 * Math.floor(rnd() * 40), y = 15 + 9 * Math.floor(rnd() * 32);
  const open = rnd() < openness(x, y);
  const len = 5 + 9 * Math.floor(rnd() * 4);
  const upright = noise(x / 30 + 30, y / 30) > .5;
  if (open) continue;
  if (upright) ctx.fillRect(x, y, 5, len); else ctx.fillRect(x, y, len, 5);
}
[[434, 90, 75], [444, 62, 110], [455, 55, 110], [464, 92, 78], [472, 90, 80], [479, 132, 90]].forEach(([x, y, h]) => ctx.fillRect(x, y, 5, h));
[[400, 57, 30, 12], [412, 78, 24, 14], [430, 130, 55, 6], [250, 137, 40, 5], [275, 155, 50, 5], [395, 57, 60, 8], [180, 45, 32, 12],
  [506, 90, 6, 18], [811, 61, 7, 9], [625, 140, 9, 5], [522, 143, 6, 8], [541, 145, 5, 8], [900, 159, 22, 7], [912, 185, 5, 14], [910, 232, 6, 14],
  [893, 245, 6, 5], [903, 252, 9, 6], [878, 261, 12, 5], [811, 252, 18, 6], [828, 258, 6, 12], [803, 279, 14, 5], [758, 270, 9, 6], [757, 297, 28, 6],
  [673, 279, 7, 22], [683, 288, 6, 11], [688, 315, 11, 15], [702, 318, 5, 20], [676, 334, 9, 5], [640, 294, 20, 6], [558, 225, 5, 9], [730, 160, 10, 6],
  [796, 172, 6, 8], [608, 103, 8, 7], [680, 76, 8, 5], [704, 84, 24, 3], [791, 40, 4, 6]].forEach(r => ctx.fillRect(...r));
for (let n = 0; n < 46000; n++) {
  const x = 115 + Math.floor(rnd() * 822), y = 15 + Math.floor(rnd() * 367);
  const cluster = noise(x / 9 + 50, y / 9 + 20);
  const amount = x < 480 ? .5 : x < 720 ? .5 : .3;
  const w = 1 + Math.floor(rnd() * 2), h = 1 + Math.floor(rnd() * 2);
  if (cluster > 1 - amount && rnd() < (x < 700 ? .5 : .3)) ctx.fillRect(x, y, w, h);
}

const agent = (x, y, color) => {
  ctx.fillStyle = color;
  ctx.fillRect(x - 1, y - 2, 3, 5);
  ctx.fillRect(x - 2, y - 1, 4, 3);
};
for (let n = 0; n < 5600; n++) {
  const x = Math.floor(115 + rnd() * 822), y = Math.floor(15 + rnd() * 367);
  const keep = x < 465 ? .28 : x < 710 ? .85 : x < 860 ? .3 : .06;
  const skip = rnd(), pick = rnd();
  if (skip > keep || (x > 700 && y < 235 && pick < .85) || noise(x / 16, y / 16 + 70) < .3) continue;
  agent(x, y, x < 455
    ? (pick < .4 ? '#a5b455' : pick < .7 ? '#5c8581' : '#d2cf3a')
    : (pick < .5 ? '#edd733' : pick < .75 ? '#e9b23a' : '#6f8c84'));
}
ctx.restore();
```
